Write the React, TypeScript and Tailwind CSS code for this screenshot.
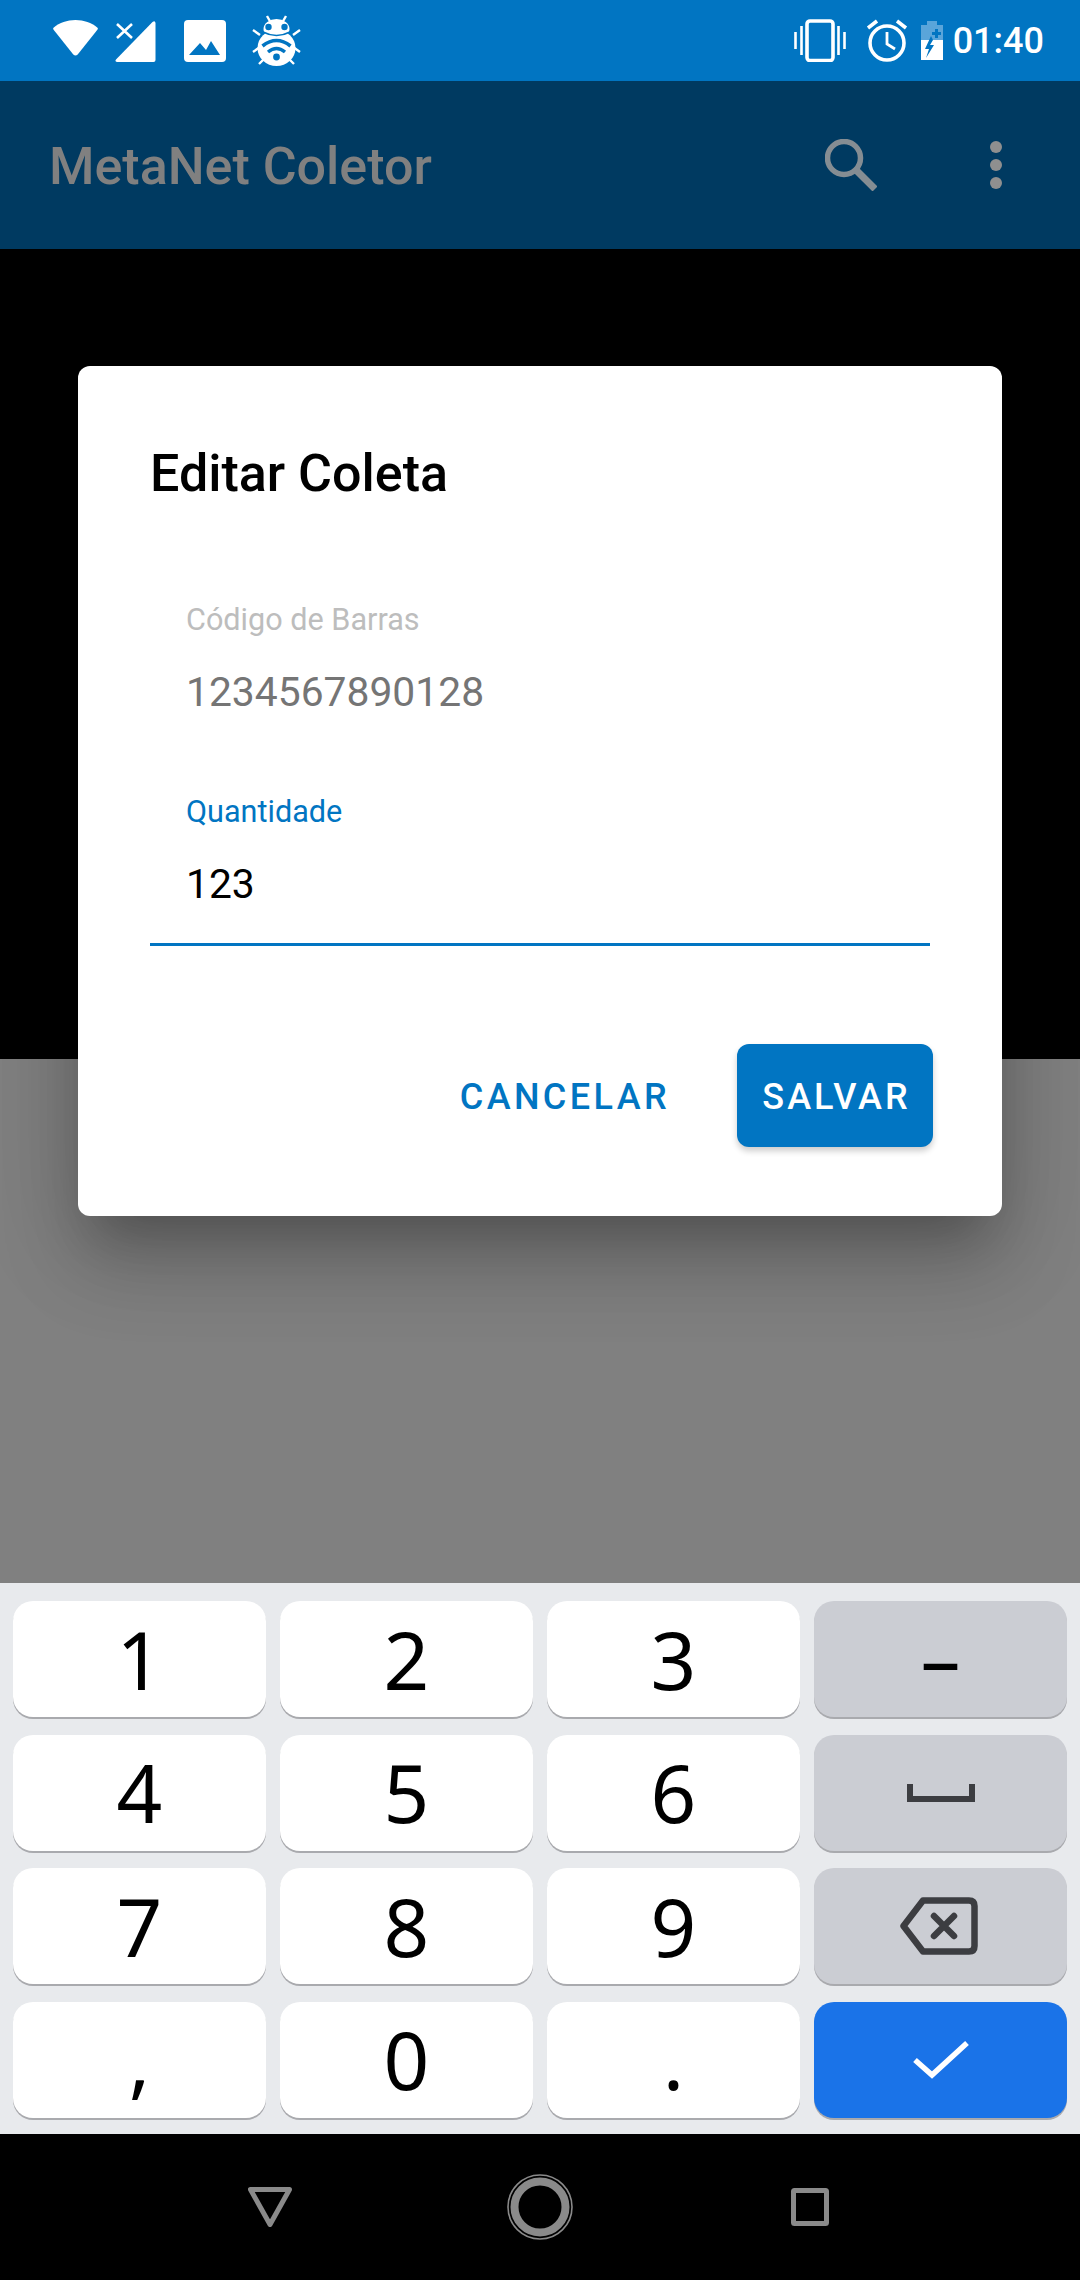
function StatusIcons() {
  return (
    <div className="flex items-center">
      <svg className="ml-[53px] mt-[-6px]" width="45" height="36" viewBox="0 0 45 36" fill="white">
        <path d="M22.5 0C14 0 6.5 2.8 .8 7.4Q-.4 8.4 .6 9.7L20.3 34.6Q22.5 36.6 24.7 34.6L44.4 9.7Q45.4 8.4 44.2 7.4C38.5 2.8 31 0 22.5 0Z" />
      </svg>
      <svg className="ml-[17px] mt-[2px]" width="41" height="41" viewBox="0 0 41 41" fill="white">
        <path d="M40.5 2V39Q40.5 41 38.5 41H2Q-.5 40.5 1 38.5L37.5 1Q40 -1 40.5 2Z" />
        <path d="M2 3L17 17M17 3L2 17" stroke="white" strokeWidth="2.6" fill="none" />
      </svg>
      <svg className="ml-[28px]" width="42" height="42" viewBox="0 0 42 42">
        <rect width="42" height="42" rx="4" fill="white" />
        <path d="M5 35L16 23L22 30L27 21L36 35Z" fill="#0175c2" />
      </svg>
      <svg className="ml-[26px]" width="49" height="51" viewBox="0 0 49 51">
        <g stroke="white" strokeWidth="2.4" fill="none">
          <path d="M15 1L19 8M34 1L30 8M1 15L8 20M48 15L41 20M1 37L8 32M48 37L41 32M7 49L13 43M42 49L36 43" />
        </g>
        <ellipse cx="24.5" cy="14" rx="13" ry="10" fill="white" />
        <ellipse cx="24.5" cy="33" rx="19" ry="18" fill="white" />
        <circle cx="16.5" cy="12" r="3.2" fill="#0175c2" />
        <circle cx="32.5" cy="12" r="3.2" fill="#0175c2" />
        <g stroke="#0175c2" fill="none">
          <path d="M11 17Q24.5 24 38 17" strokeWidth="1.6" />
          <path d="M10.5 31Q24.5 20 38.5 31" strokeWidth="3.6" />
          <path d="M16 37Q24.5 30 33 37" strokeWidth="3.4" />
        </g>
        <circle cx="24.5" cy="42" r="3.4" fill="#0175c2" />
      </svg>
    </div>
  );
}

function StatusRight() {
  return (
    <div className="flex items-center">
      <svg width="52" height="43" viewBox="0 0 52 43" fill="none" stroke="white">
        <rect x="13" y="2" width="26" height="39.5" rx="3" strokeWidth="3.6" />
        <path d="M1.5 13V30M7.5 7V36M44.5 7V36M50.5 13V30" strokeWidth="2.6" />
      </svg>
      <svg className="ml-[20px]" width="42" height="43" viewBox="0 0 42 43" fill="none" stroke="white">
        <circle cx="21" cy="24" r="17" strokeWidth="3.6" />
        <path d="M21 13V25L29 30" strokeWidth="2.8" />
        <path d="M2 9L11 2M40 9L31 2" strokeWidth="3.6" />
      </svg>
      <svg className="ml-[13px]" width="22" height="39" viewBox="0 0 22 39">
        <path d="M6 0H16V4H22V19H0V4H6Z" fill="#5aa5da" />
        <path d="M0 19H22V39H0Z" fill="white" />
        <path d="M14 8H17V11H20V14H17V17H14V14H11V11H14Z" fill="#0175c2" />
        <path d="M10 15L4 28H8L5 37L13 24H9L12 19Z" fill="#0175c2" />
      </svg>
      <span className="ml-[10px] text-[36px] leading-[40px] font-medium text-white [font-family:Roboto,sans-serif]">
        01:40
      </span>
    </div>
  );
}

function Key({ label, kind = 'light' }: { label?: React.ReactNode; kind?: 'light' | 'gray' | 'blue' }) {
  const bg = kind === 'light' ? 'bg-white' : kind === 'gray' ? 'bg-[#cbcdd3]' : 'bg-[#1a73e8]';
  return (
    <div className={`flex h-[116px] items-center justify-center rounded-[20px] shadow-[0_2px_0_#a9aaae] ${bg}`}>
      {label}
    </div>
  );
}

function Digit({ v }: { v: string }) {
  return <span className="pb-[1px] text-[80px] leading-[116px] text-black [font-family:'Noto_Sans',sans-serif]">{v}</span>;
}

export default function App() {
  return (
    <div className="flex h-[2280px] w-[1080px] flex-col overflow-hidden bg-black [font-family:Roboto,sans-serif]">
      <div className="flex h-[81px] items-center justify-between bg-[#0175c2] pr-[36px]">
        <StatusIcons />
        <StatusRight />
      </div>
      <div className="flex h-[168px] items-center justify-between bg-[#003a61] pl-[49px] pr-[78px]">
        <span className="pt-[4px] text-[52px] font-medium text-[#808080]">MetaNet Coletor</span>
        <div className="flex items-center gap-[113px]">
          <svg width="52" height="52" viewBox="0 0 52 52" fill="none" stroke="#858d93">
            <circle cx="19" cy="19" r="16.5" strokeWidth="5.5" />
            <path d="M31 31L50 50" strokeWidth="7" />
          </svg>
          <div className="flex flex-col gap-[6px]">
            <div className="h-[12px] w-[12px] rounded-full bg-[#8f8f8f]" />
            <div className="h-[12px] w-[12px] rounded-full bg-[#8f8f8f]" />
            <div className="h-[12px] w-[12px] rounded-full bg-[#8f8f8f]" />
          </div>
        </div>
      </div>

      <div className="relative flex flex-1 flex-col">
        <div className="h-[810px] bg-black" />
        <div className="flex-1 bg-[#808080]" />
        {/* dialogo de edicao */}
        <div className="absolute left-[78px] top-[117px] w-[924px] rounded-[12px] bg-white pb-[69px] pl-[72px] pr-[72px] pt-[78px] shadow-[0_33px_45px_-21px_rgba(0,0,0,0.2),0_50px_80px_4px_rgba(0,0,0,0.14),0_20px_100px_12px_rgba(0,0,0,0.12)]">
          <h2 className="text-[52px] leading-[60px] font-medium text-black">Editar Coleta</h2>
          <div className="mt-[96px] pl-[36px] text-[30.6px] leading-[40px] text-[#bdbdbd]">Código de Barras</div>
          <div className="mt-[27px] pl-[36px] text-[40.8px] leading-[50px] text-[#757575]">1234567890128</div>
          <div className="mt-[75px] pl-[36px] text-[30.6px] leading-[40px] text-[#0175c2]">Quantidade</div>
          <div className="mt-[27px] pl-[36px] text-[40.8px] leading-[50px] text-black">123</div>
          <div className="mt-[34px] h-[3px] bg-[#0175c2]" />
          <div className="mr-[-3px] mt-[98px] flex items-center justify-end gap-[67px]">
            <span className="pt-[3px] text-[36px] font-medium tracking-[3.4px] text-[#0175c2]">CANCELAR</span>
            <div className="flex h-[103px] w-[196px] items-center justify-center rounded-[12px] bg-[#0175c2] pl-[3px] pt-[3px] text-[36px] font-medium tracking-[3px] text-white shadow-[0_4px_6px_rgba(0,0,0,0.2)]">
              SALVAR
            </div>
          </div>
        </div>
      </div>

      {/* teclado numerico */}
      <div className="grid h-[551px] grid-cols-4 content-start gap-x-[14px] gap-y-[17.5px] bg-[#e8eaed] px-[13px] pt-[18px]">
        <Key label={<Digit v="1" />} />
        <Key label={<Digit v="2" />} />
        <Key label={<Digit v="3" />} />
        <Key
          kind="gray"
          label={<span className="pb-[4px] text-[80px] leading-[116px] text-black [font-family:'Noto_Sans',sans-serif]">–</span>}
        />
        <Key label={<Digit v="4" />} />
        <Key label={<Digit v="5" />} />
        <Key label={<Digit v="6" />} />
        <Key
          kind="gray"
          label={
            <svg width="68" height="18" viewBox="0 0 68 18" fill="none" stroke="#3c3d41" strokeWidth="6">
              <path d="M3 0V15H65V0" />
            </svg>
          }
        />
        <Key label={<Digit v="7" />} />
        <Key label={<Digit v="8" />} />
        <Key label={<Digit v="9" />} />
        <Key
          kind="gray"
          label={
            <svg className="mr-[4px]" width="78" height="58" viewBox="0 0 78 58" fill="none" stroke="#3c3d41" strokeWidth="6.5" strokeLinejoin="round">
              <path d="M23 3.5H69Q74.5 3.5 74.5 9V49Q74.5 54.5 69 54.5H23L3.5 29Z" />
              <path d="M34 19L54 39M54 19L34 39" strokeLinecap="round" />
            </svg>
          }
        />
        <Key label={<Digit v="," />} />
        <Key label={<Digit v="0" />} />
        <Key label={<Digit v="." />} />
        <Key
          kind="blue"
          label={
            <svg width="56" height="40" viewBox="0 0 56 40" fill="none" stroke="white" strokeWidth="5.5">
              <path d="M2 20L19 35L54 3" />
            </svg>
          }
        />
      </div>

      <div className="grid h-[146px] grid-cols-3 items-center bg-black px-[135px]">
        <div className="flex justify-center">
          <svg width="44" height="40" viewBox="0 0 44 40" fill="none" stroke="#8a8a8a" strokeWidth="5" strokeLinejoin="round">
            <path d="M2.5 2.5H41.5L22 37.5Z" />
          </svg>
        </div>
        <div className="flex justify-center">
          <svg width="66" height="66" viewBox="0 0 66 66" fill="none" stroke="#8a8a8a">
            <circle cx="33" cy="33" r="32" strokeWidth="1.6" />
            <circle cx="33" cy="33" r="25.5" strokeWidth="8" />
          </svg>
        </div>
        <div className="flex justify-center">
          <svg width="38" height="38" viewBox="0 0 38 38" fill="none" stroke="#8a8a8a" strokeWidth="5" strokeLinejoin="round">
            <rect x="2.5" y="2.5" width="33" height="33" rx="1" />
          </svg>
        </div>
      </div>
    </div>
  );
}
